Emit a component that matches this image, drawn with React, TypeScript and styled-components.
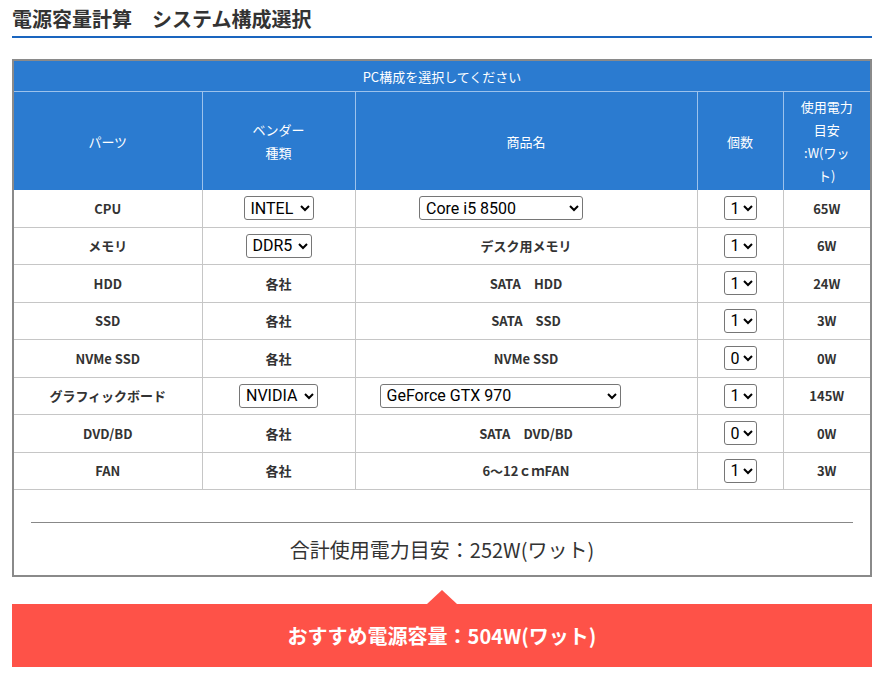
import React from "react";
import styled, { createGlobalStyle } from "styled-components";

const GlobalStyle = createGlobalStyle`
  body {
    margin: 0;
    background: #fff;
    font-family: "Noto Sans CJK JP", "Noto Sans", sans-serif;
    color: #333;
  }
`;

const Page = styled.div`
  padding: 0 14px 0 12px;
`;

const Title = styled.h2`
  margin: 0;
  padding: 5px 0 3px;
  font-size: 20px;
  line-height: 28px;
  font-weight: 700;
  color: #333;
  border-bottom: 2px solid #1a65bf;
`;

const Box = styled.div`
  margin-top: 21px;
  border: 2px solid #8a8a8a;
  background: #fff;
`;

const Table = styled.table`
  width: 100%;
  border-collapse: collapse;
  table-layout: fixed;
`;

const Col = styled.col<{ $w: number }>`
  width: ${(p) => p.$w}px;
`;

const Caption = styled.th`
  background: #2b7bd0;
  color: #fff;
  font-weight: 400;
  font-size: 13px;
  height: 30px;
  padding: 0;
  border-bottom: 1px solid #9cc2ec;
`;

const HeadCell = styled.th`
  background: #2b7bd0;
  color: #fff;
  font-weight: 400;
  font-size: 13px;
  line-height: 23px;
  height: 98px;
  padding: 0;
  border-left: 1px solid #9cc2ec;
  &:first-child {
    border-left: none;
  }
`;

const Cell = styled.td`
  text-align: center;
  font-size: 13px;
  font-weight: 700;
  color: #333;
  height: 36.5px;
  padding: 0;
  border: 1px solid #c6c6c6;
  border-top: none;
  &:first-child {
    border-left: none;
  }
  &:last-child {
    border-right: none;
  }
`;

const Select = styled.select<{ $w: number; $gap?: number }>`
  width: ${(p) => p.$w}px;
  height: 24px;
  margin-right: ${(p) => p.$gap ?? 0}px;
  font-family: Roboto, "Noto Sans", sans-serif;
  font-size: 16px;
  color: #000;
  padding: 0 0 0 2px;
  border: 1px solid #767676;
  border-radius: 3px;
  background: #fff;
  vertical-align: middle;
`;

const Footer = styled.div`
  padding: 32px 17px 0;
  height: 53px;
`;

const Rule = styled.hr`
  margin: 0;
  border: none;
  border-top: 1px solid #888;
`;

const Total = styled.div`
  text-align: center;
  font-size: 20px;
  line-height: 28px;
  margin-top: 13px;
  color: #333;
`;

const Result = styled.div`
  position: relative;
  margin-top: 27px;
  height: 63px;
  background: #fe5248;
  color: #fff;
  font-weight: 700;
  font-size: 20px;
  display: flex;
  align-items: center;
  justify-content: center;
  &::before {
    content: "";
    position: absolute;
    top: -14px;
    left: 50%;
    margin-left: -15px;
    border-left: 15px solid transparent;
    border-right: 15px solid transparent;
    border-bottom: 14px solid #fe5248;
  }
`;

type Row = {
  part: string;
  vendor: React.ReactNode;
  product: React.ReactNode;
  count: string;
  watt: string;
};

const opts = (list: string[], w: number, gap = 0) => (
  <Select $w={w} $gap={gap} defaultValue={list[0]}>
    {list.map((o) => (
      <option key={o}>{o}</option>
    ))}
  </Select>
);

const rows: Row[] = [
  { part: "CPU", vendor: opts(["INTEL", "AMD"], 70), product: opts(["Core i5 8500", "Core i7 8700"], 164, 50), count: "1", watt: "65W" },
  { part: "メモリ", vendor: opts(["DDR5", "DDR4"], 66), product: "デスク用メモリ", count: "1", watt: "6W" },
  { part: "HDD", vendor: "各社", product: "SATA　HDD", count: "1", watt: "24W" },
  { part: "SSD", vendor: "各社", product: "SATA　SSD", count: "1", watt: "3W" },
  { part: "NVMe SSD", vendor: "各社", product: "NVMe SSD", count: "0", watt: "0W" },
  { part: "グラフィックボード", vendor: opts(["NVIDIA", "AMD"], 79), product: opts(["GeForce GTX 970", "GeForce GTX 1080"], 241, 52), count: "1", watt: "145W" },
  { part: "DVD/BD", vendor: "各社", product: "SATA　DVD/BD", count: "0", watt: "0W" },
  { part: "FAN", vendor: "各社", product: "6〜12ｃｍFAN", count: "1", watt: "3W" },
];

const counts = ["0", "1", "2", "3", "4"];

export default function App() {
  return (
    <Page>
      <GlobalStyle />
      <Title>電源容量計算　システム構成選択</Title>
      <Box>
        <Table>
          <colgroup>
            <Col $w={188} />
            <Col $w={153} />
            <Col $w={342} />
            <Col $w={86} />
            <Col $w={87} />
          </colgroup>
          <thead>
            <tr>
              <Caption colSpan={5}>PC構成を選択してください</Caption>
            </tr>
            <tr>
              <HeadCell>パーツ</HeadCell>
              <HeadCell>
                ベンダー
                <br />
                種類
              </HeadCell>
              <HeadCell>商品名</HeadCell>
              <HeadCell>個数</HeadCell>
              <HeadCell>
                使用電力
                <br />
                目安
                <br />
                :W(ワッ
                <br />
                ト)
              </HeadCell>
            </tr>
          </thead>
          <tbody>
            {rows.map((r) => (
              <tr key={r.part}>
                <Cell>{r.part}</Cell>
                <Cell>{r.vendor}</Cell>
                <Cell>{r.product}</Cell>
                <Cell>
                  <Select $w={33} defaultValue={r.count}>
                    {counts.map((c) => (
                      <option key={c}>{c}</option>
                    ))}
                  </Select>
                </Cell>
                <Cell>{r.watt}</Cell>
              </tr>
            ))}
          </tbody>
        </Table>
        <Footer>
          <Rule />
          <Total>合計使用電力目安：252W(ワット)</Total>
        </Footer>
      </Box>
      <Result>おすすめ電源容量：504W(ワット)</Result>
    </Page>
  );
}
